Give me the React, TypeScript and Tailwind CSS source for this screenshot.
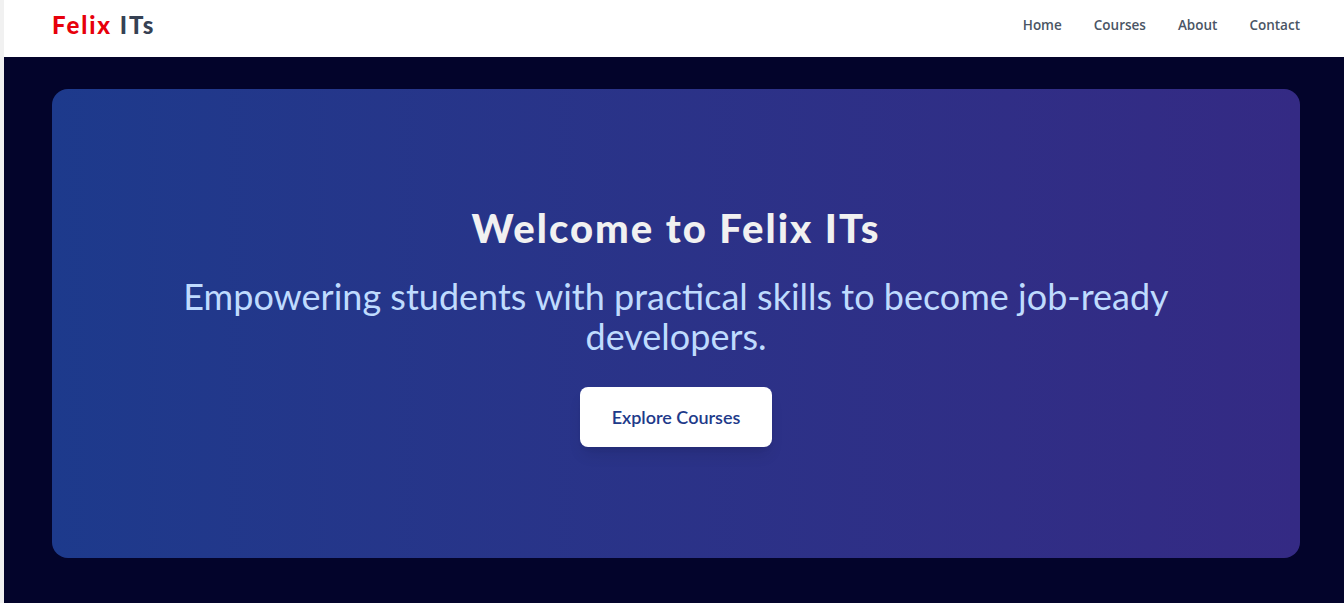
export default function App() {
  return (
    <div className="min-h-[603px] border-l-4 border-[#f1f1f1] bg-[#03042b] font-['Lato','Liberation_Sans',sans-serif]">
      <header className="h-[57px] bg-white flex items-center justify-between pl-12 pr-11 pb-[7px]">
        <div className="text-2xl leading-8 font-black tracking-[0.08em]">
          <span className="text-[#e7000b]">Felix</span>{' '}
          <span className="text-[#364153]">ITs</span>
        </div>
        <nav className="flex items-center gap-8 text-[13.5px] font-semibold text-[#4a5565] font-['Open_Sans','Liberation_Sans',sans-serif]">
          <a href="#">Home</a>
          <a href="#">Courses</a>
          <a href="#">About</a>
          <a href="#">Contact</a>
        </nav>
      </header>

      <section className="pl-12 pr-11 pt-8 pb-12">
        <div className="h-[469px] rounded-2xl bg-gradient-to-r from-[#1d3a8c] to-[#342a84] flex flex-col items-center justify-center text-center px-8 pt-2">
          <h1 className="text-[40px] leading-10 font-black text-[#f1f1f1] tracking-wider mb-7">
            Welcome to Felix ITs
          </h1>
          <p className="max-w-5xl text-4xl leading-10 text-[#bfdbfe] mb-[31px]">
            Empowering students with practical skills to become job-ready developers.
          </p>
          <a
            href="#"
            className="px-8 py-4 rounded-lg bg-white text-lg font-semibold text-[#1e3a8a] shadow-lg"
          >
            Explore Courses
          </a>
        </div>
      </section>
    </div>
  );
}
